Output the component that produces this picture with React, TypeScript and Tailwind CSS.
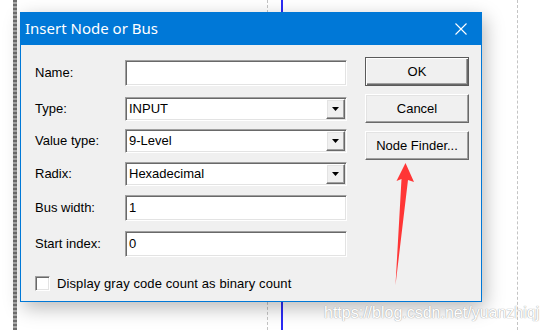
import React from "react";

const sunken =
  "border border-[#a0a0a0] border-b-white border-r-white shadow-[inset_1px_1px_0_#696969,inset_-1px_-1px_0_#e3e3e3] bg-white";

const raised =
  "border border-white border-b-[#696969] border-r-[#696969] shadow-[inset_-1px_-1px_0_#a0a0a0,inset_1px_1px_0_#e3e3e3] bg-[#f0f0f0]";

function Label({ text }: { text: string }) {
  return <div className="w-[90px] shrink-0 text-[13px] text-black">{text}</div>;
}

function TextBox({ label, value, className }: { label: string; value: string; className: string }) {
  return (
    <div className={`flex items-center ${className}`}>
      <Label text={label} />
      <div className={`w-[222px] h-[26px] flex items-center pl-[3px] text-[13px] ${sunken}`}>{value}</div>
    </div>
  );
}

function Combo({ label, value, className }: { label: string; value: string; className: string }) {
  return (
    <div className={`flex items-center ${className}`}>
      <Label text={label} />
      <div className={`w-[222px] h-[24px] flex items-center pl-[3px] pr-[1px] text-[13px] ${sunken}`}>
        <span className="flex-1">{value}</span>
        <div className={`w-[19px] h-[20px] flex items-center justify-center ${raised}`}>
          <svg width="7" height="4" viewBox="0 0 7 4">
            <polygon points="0,0 7,0 3.5,4" fill="#000" />
          </svg>
        </div>
      </div>
    </div>
  );
}

export default function App() {
  return (
    <div
      className="relative w-[546px] h-[330px] overflow-hidden bg-white pt-[12px] pl-[20px]"
      style={{ fontFamily: '"Liberation Sans", Arial, sans-serif' }}
    >
      {/* canvas behind the dialog */}
      <div className="absolute left-[13px] top-0 w-[4px] h-full bg-[repeating-linear-gradient(to_bottom,#6e6e6e_0px,#6e6e6e_2px,#a8a8a8_2px,#a8a8a8_4px)]" />
      <div className="absolute left-[267px] top-0 h-full border-l border-dashed border-[#c4c4c4]" />
      <div className="absolute left-[281px] top-0 w-[2px] h-full bg-[#2b2bf5]" />
      <div className="absolute left-[517px] top-0 h-full border-l border-dashed border-[#c4c4c4]" />

      <div className="relative z-10 w-[462px] h-[290px] flex flex-col shadow-[3px_6px_18px_rgba(0,0,0,0.28)]">
        <div className="h-[33px] bg-[#0078d7] flex items-center pl-[5px] pr-[15px] text-white">
          <span className="flex-1 text-[15px]" style={{ fontFamily: '"Noto Sans", "Open Sans", sans-serif' }}>
            Insert Node or Bus
          </span>
          <svg width="12" height="12" viewBox="0 0 12 12">
            <path d="M0.5 0.5 L11.5 11.5 M11.5 0.5 L0.5 11.5" stroke="#fff" strokeWidth="1.1" />
          </svg>
        </div>

        <div className="flex-1 flex bg-[#f0f0f0] border-x border-b border-[#0078d7]">
          <div className="flex flex-col pl-[14px] pt-[15px]">
            <TextBox label="Name:" value="" className="" />
            <Combo label="Type:" value="INPUT" className="mt-[11px]" />
            <Combo label="Value type:" value="9-Level" className="mt-[8px]" />
            <Combo label="Radix:" value="Hexadecimal" className="mt-[9px]" />
            <TextBox label="Bus width:" value="1" className="mt-[9px]" />
            <TextBox label="Start index:" value="0" className="mt-[10px]" />
            <div className="flex items-center mt-[17px] text-[13px]">
              <div className={`w-[15px] h-[15px] ${sunken}`} />
              <span className="ml-[7px] tracking-[0.1px]">Display gray code count as binary count</span>
            </div>
          </div>

          <div className="flex flex-col gap-[8px] pl-[18px] pt-[12px]">
            <div className="w-[104px] h-[29px] flex items-center justify-center text-[13px] bg-[#f0f0f0] border border-[#5a5a5a] shadow-[inset_1px_1px_0_#fff,inset_-1px_-1px_0_#696969,inset_-2px_-2px_0_#a0a0a0]">
              OK
            </div>
            <div className={`w-[104px] h-[29px] flex items-center justify-center text-[13px] ${raised}`}>Cancel</div>
            <div className={`w-[104px] h-[29px] flex items-center justify-center text-[13px] ${raised}`}>Node Finder...</div>
          </div>
        </div>
      </div>

      {/* red annotation arrow */}
      <svg className="absolute left-0 top-0 z-20" width="546" height="330" viewBox="0 0 546 330">
        <polygon points="405.5,163 414,182 408,180 395.5,285 401.5,179 396.5,181" fill="#ff3636" />
      </svg>

      <div className="absolute left-[324px] top-[303px] z-20 text-[16px] leading-[20px] text-white [text-shadow:0_0_1px_#a8a8a8,0_0_1px_#a8a8a8]">
        https://blog.csdn.net/yuanzhiqj
      </div>
    </div>
  );
}
